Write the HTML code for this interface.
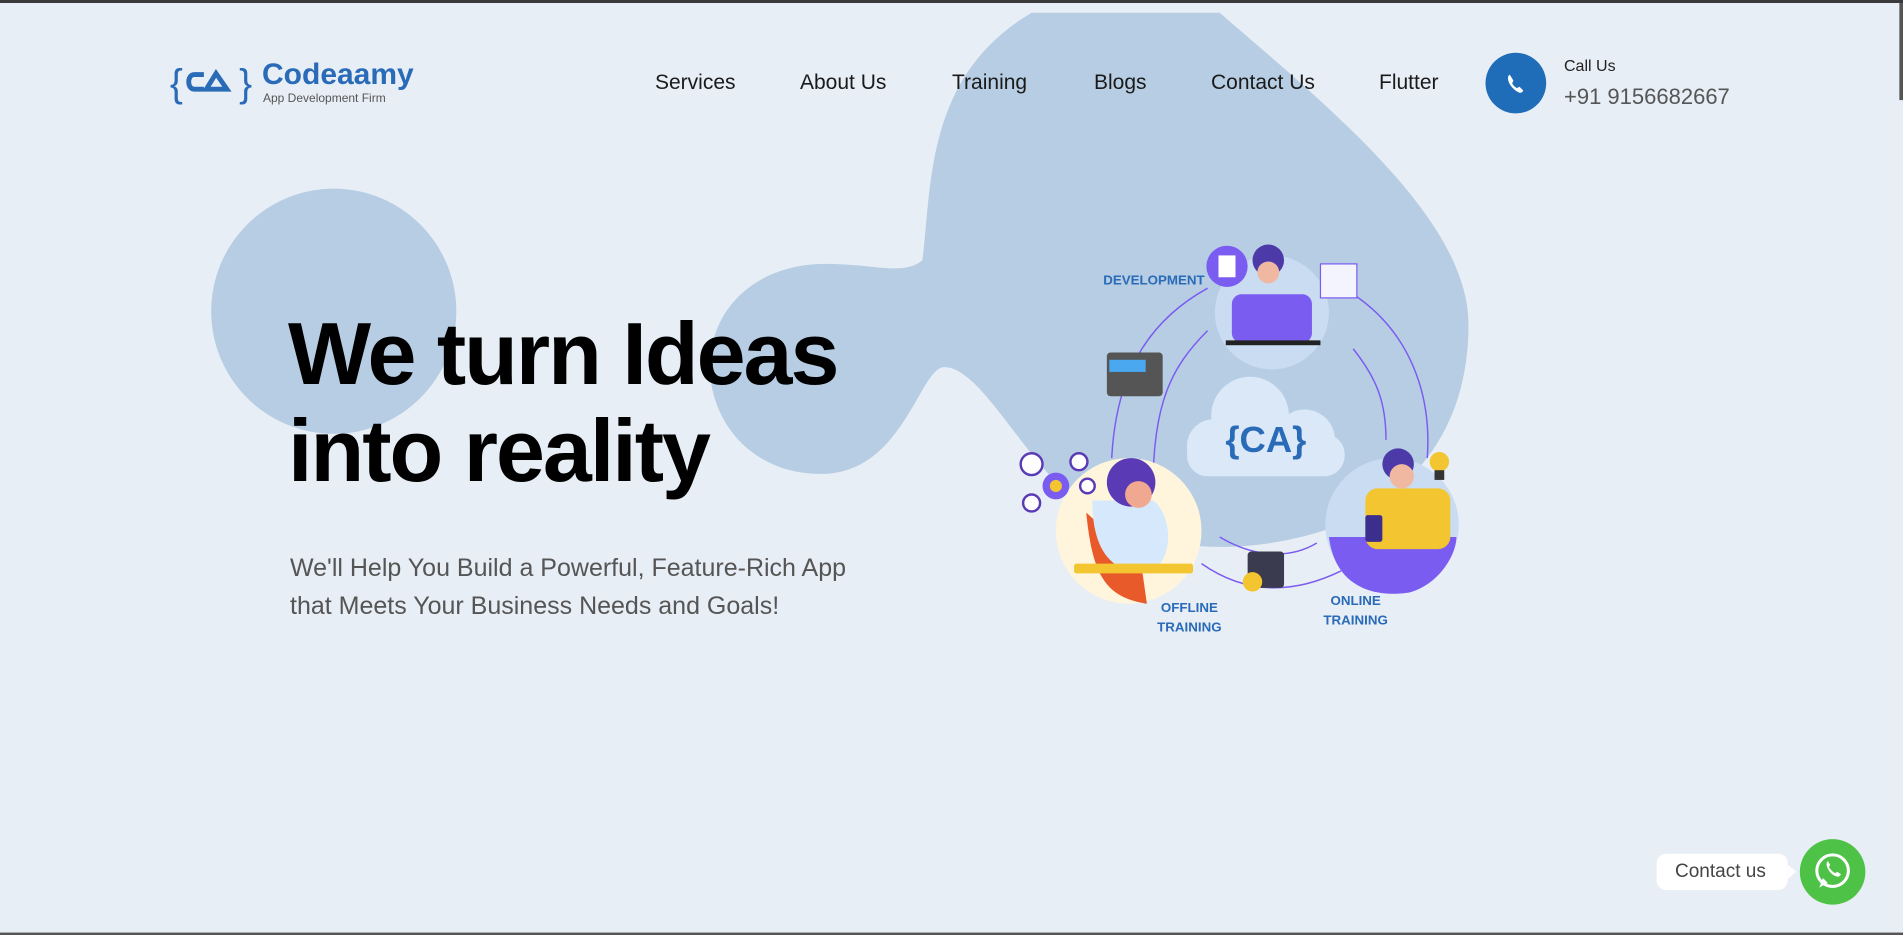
<!DOCTYPE html>
<html><head><meta charset="utf-8"><style>
html,body{margin:0;padding:0}
body{width:1903px;height:932px;overflow:hidden;background:#e8eef5;position:relative;font-family:"Liberation Sans",sans-serif;border-top:3px solid #3a3a3a;box-sizing:border-box}
svg.bg{position:absolute;left:0;top:0;width:1903px;height:932px}
.t{position:absolute;white-space:nowrap}
.nav{top:68px;font-size:21px;color:#1a1a1a}
</style></head><body>
<svg class="bg" viewBox="0 0 1568 768" preserveAspectRatio="none">
<circle cx="275" cy="254" r="101" fill="#b7cde3"/>
<path d="M850 8 L1005 8 C1100 90 1210 180 1210 265 C1210 355 1160 410 1090 435 C1010 460 925 450 875 400 C835 360 805 300 778 300 C758 300 745 385 680 388 C620 390 585 345 585 300 C585 250 625 215 680 215 C720 215 745 225 760 212 C768 150 762 60 850 8 Z" fill="#b7cde3"/>
<g fill="none" stroke="#7a5cf0" stroke-width="1.2">
<path d="M995 235 C950 260 920 300 916 375"/>
<path d="M995 270 C965 300 950 330 950 400"/>
<path d="M1115 240 C1160 270 1180 320 1176 375"/>
<path d="M1115 285 C1135 310 1142 330 1142 360"/>
<path d="M1085 445 C1060 460 1030 455 1005 440"/>
<path d="M990 462 C1030 490 1070 485 1105 468"/>
</g>
<g fill="#dbe8f8"><circle cx="1030" cy="340" r="32"/><circle cx="1075" cy="360" r="25"/><circle cx="1000" cy="365" r="22"/><rect x="978" y="355" width="130" height="35" rx="17"/></g>
<text x="1043" y="370" font-family="Liberation Sans" font-weight="bold" font-size="30" fill="#2a6bb8" text-anchor="middle">{CA}</text>
<circle cx="1048" cy="255" r="47" fill="#c9dcf2"/>
<rect x="1015" y="240" width="66" height="40" rx="8" fill="#7a5cf0"/>
<circle cx="1045" cy="212" r="13" fill="#4b3aa8"/><circle cx="1045" cy="222" r="9" fill="#f0b8a0"/>
<rect x="1010" y="278" width="78" height="4" fill="#222"/>
<circle cx="1011" cy="217" r="17" fill="#7a5cf0"/><rect x="1004" y="208" width="14" height="18" fill="#fff"/>
<rect x="1088" y="215" width="30" height="28" fill="#f4f4ff" stroke="#7a5cf0"/>
<circle cx="930" cy="435" r="60" fill="#fff5dc"/>
<path d="M895 420 C900 470 910 490 945 495 L940 460 Z" fill="#e85a2a"/>
<path d="M900 410 C900 450 915 470 945 470 C970 460 965 420 950 410 Z" fill="#d6e8fb"/>
<circle cx="932" cy="395" r="20" fill="#5a3bb5"/><circle cx="938" cy="405" r="11" fill="#f0a890"/>
<rect x="885" y="462" width="98" height="8" rx="2" fill="#f3c530"/>
<circle cx="850" cy="380" r="9" fill="#fff" stroke="#5a3bb5" stroke-width="2"/>
<circle cx="870" cy="398" r="11" fill="#7a5cf0"/><circle cx="870" cy="398" r="5" fill="#f3c530"/>
<circle cx="889" cy="378" r="7" fill="#fff" stroke="#5a3bb5" stroke-width="2"/>
<circle cx="850" cy="412" r="7" fill="#fff" stroke="#5a3bb5" stroke-width="2"/>
<circle cx="896" cy="398" r="6" fill="#fff" stroke="#5a3bb5" stroke-width="2"/>
<circle cx="1147" cy="430" r="55" fill="#c9dcf2"/>
<path d="M1095 440 C1100 480 1130 490 1160 486 C1185 480 1200 455 1200 440 Z" fill="#7a5cf0"/>
<rect x="1125" y="400" width="70" height="50" rx="10" fill="#f3c530"/>
<circle cx="1152" cy="380" r="13" fill="#4b3aa8"/><circle cx="1155" cy="390" r="10" fill="#f0b8a0"/>
<rect x="1125" y="422" width="14" height="22" rx="2" fill="#3b2e8c"/>
<circle cx="1186" cy="378" r="8" fill="#f3c530"/><rect x="1182" y="385" width="8" height="8" fill="#333"/>
<rect x="912" y="288" width="46" height="36" rx="3" fill="#555"/><rect x="914" y="294" width="30" height="10" fill="#4aa8f0"/>
<rect x="1028" y="452" width="30" height="30" rx="3" fill="#3b3b50"/>
<circle cx="1032" cy="477" r="8" fill="#f3c530"/>
<g font-family="Liberation Sans" font-weight="bold" font-size="11" fill="#2a6bb8">
<text x="909" y="232">DEVELOPMENT</text>
<text x="980" y="502" text-anchor="middle">OFFLINE</text>
<text x="980" y="518" text-anchor="middle">TRAINING</text>
<text x="1117" y="496" text-anchor="middle">ONLINE</text>
<text x="1117" y="512" text-anchor="middle">TRAINING</text>
</g>
<text x="140" y="77" font-family="Liberation Sans" font-size="32" fill="#2a6bb8">{</text>
<text x="197" y="77" font-family="Liberation Sans" font-size="32" fill="#2a6bb8">}</text>
<path d="M168 59 L160 59 C154 59 154 71 160 71 L168 71 M170 71 L178 58 L187 71 Z" fill="none" stroke="#2a6bb8" stroke-width="4"/>
<circle cx="1249" cy="66" r="25" fill="#1f6cb8"/>
<path d="M1244 59 c-2 1-2 4 0 8 c2 3 5 6 8 7 c2 0 3-1 3-2 l-3-3 l-2 1 c-1 0-4-3-4-4 l1-2 z" fill="#fff"/>
<circle cx="1510" cy="716" r="27" fill="#4dc247"/>
<circle cx="1510" cy="715" r="13" fill="none" stroke="#fff" stroke-width="2.5"/>
<path d="M1499 729 l3-8 4 4z" fill="#fff"/>
<path d="M1505 709 c0 5 5 11 10 11 l2-2 -3-2 -2 1 c-2-1-4-3-5-5 l1-2 -2-3z" fill="#fff"/>
<rect x="1365" y="701" width="108" height="30" rx="8" fill="#fff"/>
<path d="M1473 710 l7 6 -7 6z" fill="#fff"/>
<rect x="1565" y="0" width="3" height="80" fill="#555"/>
<rect x="0" y="766" width="1568" height="2" fill="#555"/>
</svg>
<div class="t" style="left:262px;top:55px;font-size:30px;font-weight:bold;color:#2a6bb8">Codeaamy</div>
<div class="t" style="left:263px;top:88px;font-size:12px;color:#555">App Development Firm</div>
<div class="t nav" style="left:655px">Services</div>
<div class="t nav" style="left:800px">About Us</div>
<div class="t nav" style="left:952px">Training</div>
<div class="t nav" style="left:1094px">Blogs</div>
<div class="t nav" style="left:1211px">Contact Us</div>
<div class="t nav" style="left:1379px">Flutter</div>
<div class="t" style="left:1564px;top:55px;font-size:16px;color:#222">Call Us</div>
<div class="t" style="left:1564px;top:81px;font-size:22px;color:#555">+91 9156682667</div>
<div class="t" style="left:288px;top:302px;font-size:88px;font-weight:bold;letter-spacing:-2px;line-height:97px;color:#000">We turn Ideas<br>into reality</div>
<div class="t" style="left:290px;top:546px;font-size:25px;line-height:38px;color:#555">We'll Help You Build a Powerful, Feature-Rich App<br>that Meets Your Business Needs and Goals!</div>
<div class="t" style="left:1675px;top:858px;font-size:19px;color:#444">Contact us</div>
</body></html>
